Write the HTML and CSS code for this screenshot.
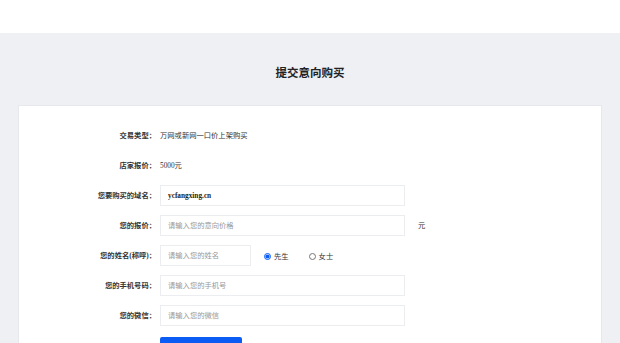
FILE: index.html
```
<!DOCTYPE html>
<html>
<head>
  <meta charset="utf-8">
  <title>提交意向购买</title>
  <link rel="stylesheet" href="styles.css">
</head>
<body>
  <div class="header"></div>

  <div class="main">
    <h2 class="title">提交意向购买</h2>

    <div class="card">
      <div class="row">
        <span class="name">交易类型：</span>
        <div class="value">万网或新网一口价上架购买</div>
      </div>

      <div class="row">
        <span class="name">店家报价：</span>
        <div class="value">5000元</div>
      </div>

      <div class="row">
        <span class="name">您要购买的域名：</span>
        <input type="text" class="field domain" value="ycfangxing.cn" readonly>
      </div>

      <div class="row">
        <span class="name">您的报价：</span>
        <input type="text" class="field" placeholder="请输入您的意向价格">
        <span class="unit">元</span>
      </div>

      <div class="row">
        <span class="name">您的姓名(称呼)：</span>
        <input type="text" class="field short" placeholder="请输入您的姓名">
        <label class="radio first"><input type="radio" name="sex" checked>先生</label>
        <label class="radio"><input type="radio" name="sex">女士</label>
      </div>

      <div class="row">
        <span class="name">您的手机号码：</span>
        <input type="text" class="field" placeholder="请输入您的手机号">
      </div>

      <div class="row">
        <span class="name">您的微信：</span>
        <input type="text" class="field" placeholder="请输入您的微信">
      </div>

      <div class="row">
        <span class="name"></span>
        <button class="submit">提交</button>
      </div>
    </div>
  </div>
</body>
</html>
```

FILE: styles.css
```
body { margin: 0; font-family: "Liberation Serif", "Noto Sans CJK SC", serif; font-size: 7.3px; color: #333; background: #eef0f4; }
.header { height: 33px; background: #fff; }
.main { padding: 0 18px; }
.title { margin: 0; padding-top: 32px; height: 40px; box-sizing: content-box; text-align: center; font-size: 11.5px; line-height: 16px; font-weight: bold; color: #222; }
.card { background: #fff; border: 1px solid #e6e8ec; padding: 14px 0 20px; }
.row { display: flex; align-items: center; height: 30px; }
.name { width: 137px; text-align: right; font-weight: bold; color: #333; padding-right: 4px; flex: none; }
.value { color: #333; }
.field { width: 245px; height: 21px; box-sizing: border-box; border: 1px solid #ebedf0; padding: 0 7px; font: inherit; color: #333; outline: none; }
.field::placeholder { color: #999; }
.field.domain { font-weight: bold; color: #222; }
.field.short { width: 91px; }
.unit { margin-left: 13px; }
.radio { display: flex; align-items: center; padding-top: 2px; }
.radio.first { margin-left: 13px; margin-right: 20px; }
.radio input { width: 7px; height: 7px; margin: 0 3px 0 0; accent-color: #0a5cf5; }
.submit { width: 82px; height: 26px; margin-top: 10px; border: none; border-radius: 2px; background: #0a5cf5; color: #fff; font: inherit; font-size: 8px; }
```
